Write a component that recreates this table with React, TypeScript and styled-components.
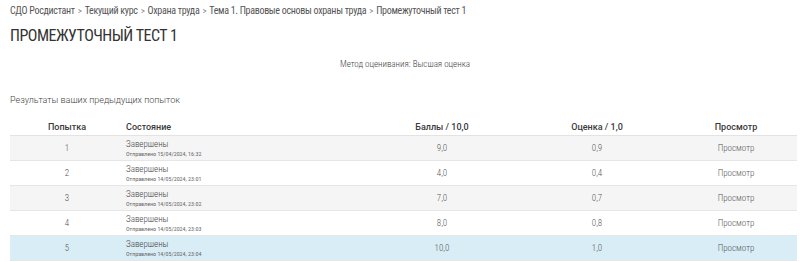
import styled, { createGlobalStyle } from "styled-components";

const GlobalStyle = createGlobalStyle`
    body {
        margin: 0;
        background: #fff;
        font-family: Roboto, "Liberation Sans", sans-serif;
        font-stretch: 85%;
        color: #333;
    }
`;

const Page = styled.div`
    padding: 4px 0 0 10px;
    width: 790px;
`;

const Breadcrumbs = styled.div`
    display: flex;
    align-items: center;
    font-size: 10px;
    letter-spacing: -0.3px;
    color: #555;
    height: 12px;
`;

const Sep = styled.span`
    color: #888;
    font-size: 9px;
    margin: 0 3px;
`;

const Title = styled.h1`
    margin: 11px 0 0;
    font-size: 16px;
    font-weight: 400;
    letter-spacing: -0.5px;
    color: #333;
    text-transform: uppercase;
    line-height: 18px;
`;

const Method = styled.div`
    margin-top: 13px;
    text-align: center;
    font-size: 9px;
    font-weight: 300;
    color: #444;
    line-height: 12px;
`;

const Caption = styled.div`
    margin-top: 24px;
    font-size: 9px;
    font-weight: 300;
    font-stretch: 88%;
    color: #444;
    line-height: 12px;
`;

const Table = styled.div`
    margin-top: 13px;
    width: 787px;
`;

const cols = "114px 241px 154px 156px 122px";

const HeadRow = styled.div`
    display: grid;
    grid-template-columns: ${cols};
    height: 16px;
    align-items: center;
    border-bottom: 1px solid #e3e3e3;
    font-size: 9px;
    font-weight: 500;
    font-stretch: 90%;
    color: #3a3a3a;
`;

const Row = styled.div<{ $bg: string }>`
    display: grid;
    grid-template-columns: ${cols};
    height: 24px;
    align-items: center;
    border-bottom: 1px solid #e6e6e6;
    background: ${(p) => p.$bg};
    font-size: 9px;
    font-weight: 300;
    color: #555;
`;

const Cell = styled.div<{ $left?: boolean }>`
    text-align: ${(p) => (p.$left ? "left" : "center")};
    padding-left: ${(p) => (p.$left ? "2px" : "0")};
`;

const State = styled.div`
    font-size: 9px;
    font-weight: 300;
    color: #444;
    line-height: 10px;
`;

const Sent = styled.div`
    font-size: 6px;
    font-weight: 400;
    color: #666;
    line-height: 9px;
`;

const crumbs = ["СДО Росдистант", "Текущий курс", "Охрана труда", "Тема 1. Правовые основы охраны труда", "Промежуточный тест 1"];

const attempts = [
    { n: 1, date: "15/04/2024, 16:32", score: "9,0", grade: "0,9" },
    { n: 2, date: "14/05/2024, 23:01", score: "4,0", grade: "0,4" },
    { n: 3, date: "14/05/2024, 23:02", score: "7,0", grade: "0,7" },
    { n: 4, date: "14/05/2024, 23:03", score: "8,0", grade: "0,8" },
    { n: 5, date: "14/05/2024, 23:04", score: "10,0", grade: "1,0" },
];

export default function App() {
    return (
        <Page>
            <GlobalStyle />
            <Breadcrumbs>
                {crumbs.map((c, i) => (
                    <span key={c}>
                        {c}
                        {i < crumbs.length - 1 && <Sep>&gt;</Sep>}
                    </span>
                ))}
            </Breadcrumbs>
            <Title>Промежуточный тест 1</Title>
            <Method>Метод оценивания: Высшая оценка</Method>
            <Caption>Результаты ваших предыдущих попыток</Caption>
            <Table>
                <HeadRow>
                    <Cell>Попытка</Cell>
                    <Cell $left>Состояние</Cell>
                    <Cell>Баллы / 10,0</Cell>
                    <Cell>Оценка / 1,0</Cell>
                    <Cell>Просмотр</Cell>
                </HeadRow>
                {attempts.map((a) => (
                    <Row key={a.n} $bg={a.n === 5 ? "#d9edf7" : a.n % 2 ? "#f5f5f5" : "#fff"}>
                        <Cell>{a.n}</Cell>
                        <Cell $left>
                            <State>Завершены</State>
                            <Sent>Отправлено {a.date}</Sent>
                        </Cell>
                        <Cell>{a.score}</Cell>
                        <Cell>{a.grade}</Cell>
                        <Cell>Просмотр</Cell>
                    </Row>
                ))}
            </Table>
        </Page>
    );
}
